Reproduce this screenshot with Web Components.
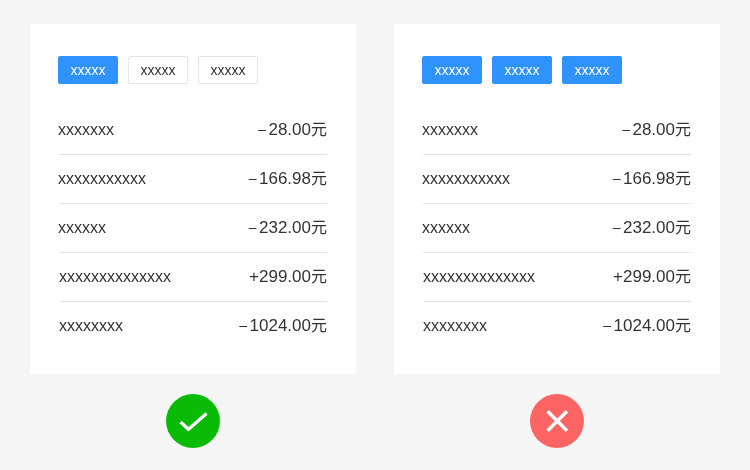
<!DOCTYPE html>
<html lang="zh">
<head>
<meta charset="utf-8">
<title>tags</title>
<style>
    html, body { margin: 0; background: #f5f5f5; }
    body { font-family: "Liberation Sans", "Noto Sans CJK SC", sans-serif; color: #333; }
    .page {
        display: grid;
        grid-template-columns: 326px 326px;
        column-gap: 38px;
        padding: 24px 30px 0;
    }
</style>
</head>
<body>
<div class="page">
    <demo-example kind="right" active="1">
        <demo-row label="xxxxxxx" sign="–" amount="28.00"></demo-row>
        <demo-row label="xxxxxxxxxxx" sign="–" amount="166.98"></demo-row>
        <demo-row label="xxxxxx" sign="–" amount="232.00"></demo-row>
        <demo-row label="xxxxxxxxxxxxxx" sign="+" amount="299.00" inset></demo-row>
        <demo-row label="xxxxxxxx" sign="–" amount="1024.00" inset last></demo-row>
    </demo-example>
    <demo-example kind="wrong" active="3">
        <demo-row label="xxxxxxx" sign="–" amount="28.00"></demo-row>
        <demo-row label="xxxxxxxxxxx" sign="–" amount="166.98"></demo-row>
        <demo-row label="xxxxxx" sign="–" amount="232.00"></demo-row>
        <demo-row label="xxxxxxxxxxxxxx" sign="+" amount="299.00" inset></demo-row>
        <demo-row label="xxxxxxxx" sign="–" amount="1024.00" inset last></demo-row>
    </demo-example>
</div>

<script>
class DemoTag extends HTMLElement {
    constructor() {
        super();
        this.attachShadow({ mode: "open" });
        this.shadowRoot.innerHTML = `
            <style>
                :host {
                    display: flex;
                    align-items: center;
                    justify-content: center;
                    box-sizing: border-box;
                    width: 60px;
                    height: 28px;
                    font-size: 14px;
                    color: #333;
                    background: #fff;
                    border: 1px solid #e5e5e5;
                    border-radius: 2px;
                }
                :host([active]) {
                    color: #fff;
                    background: #2e93ff;
                    border-color: #2e93ff;
                }
            </style>
            <slot></slot>
        `;
    }
}

class DemoRow extends HTMLElement {
    constructor() {
        super();
        this.attachShadow({ mode: "open" });
        this.shadowRoot.innerHTML = `
            <style>
                :host {
                    display: flex;
                    align-items: baseline;
                    justify-content: space-between;
                    box-sizing: border-box;
                    height: 49px;
                    line-height: 48px;
                    font-size: 16px;
                    color: #333;
                    border-bottom: 1px solid #e5e5e5;
                    margin-left: 1px;
                    will-change: transform;
                }
                :host([inset]) { margin-left: 2px; }
                :host([last]) { border-bottom: 0; }
                .label { margin-left: -1px; }
                .num { font-size: 17px; }
                .sign { font-size: 17px; }
                .sign.minus { font-size: 14px; line-height: 0; margin-right: 2.5px; vertical-align: 1.5px; }
            </style>
            <span class="label"></span>
            <span class="amount"><span class="sign"></span><span class="num"></span><span class="unit">元</span></span>
        `;
    }

    connectedCallback() {
        const sign = this.shadowRoot.querySelector(".sign");
        sign.textContent = this.getAttribute("sign");
        if (this.getAttribute("sign") !== "+") sign.classList.add("minus");
        this.shadowRoot.querySelector(".label").textContent = this.getAttribute("label");
        this.shadowRoot.querySelector(".num").textContent = this.getAttribute("amount");
    }
}

class DemoExample extends HTMLElement {
    constructor() {
        super();
        this.attachShadow({ mode: "open" });
        this.shadowRoot.innerHTML = `
            <style>
                :host { display: block; }
                .card {
                    box-sizing: border-box;
                    height: 350px;
                    padding: 32px 29px 0 28px;
                    background: #fff;
                }
                .tags { display: flex; gap: 10px; margin-bottom: 22px; will-change: transform; }
                .badge {
                    display: block;
                    width: 54px;
                    height: 54px;
                    margin: 20px auto 0;
                }
            </style>
            <div class="card">
                <div class="tags"></div>
                <slot></slot>
            </div>
            <svg class="badge" viewBox="0 0 54 54"></svg>
        `;
    }

    connectedCallback() {
        const active = Number(this.getAttribute("active"));
        const tags = this.shadowRoot.querySelector(".tags");
        for (let i = 0; i < 3; i++) {
            const tag = document.createElement("demo-tag");
            tag.textContent = "xxxxx";
            if (i < active) tag.setAttribute("active", "");
            tags.appendChild(tag);
        }

        const badge = this.shadowRoot.querySelector(".badge");
        if (this.getAttribute("kind") === "right") {
            badge.innerHTML = `
                <circle cx="27" cy="27" r="27" fill="#09bb07"/>
                <path d="M14.500 28L22.500 35.300L40.500 19.500" fill="none" stroke="#fff" stroke-width="3.2"/>
            `;
        } else {
            badge.innerHTML = `
                <circle cx="27" cy="27" r="27" fill="#ff6464"/>
                <path d="M17.600 17.300L37 36.700M37 17.300L17.600 36.700" fill="none" stroke="#fff" stroke-width="3.5"/>
            `;
        }
    }
}

customElements.define("demo-tag", DemoTag);
customElements.define("demo-row", DemoRow);
customElements.define("demo-example", DemoExample);
</script>
</body>
</html>
